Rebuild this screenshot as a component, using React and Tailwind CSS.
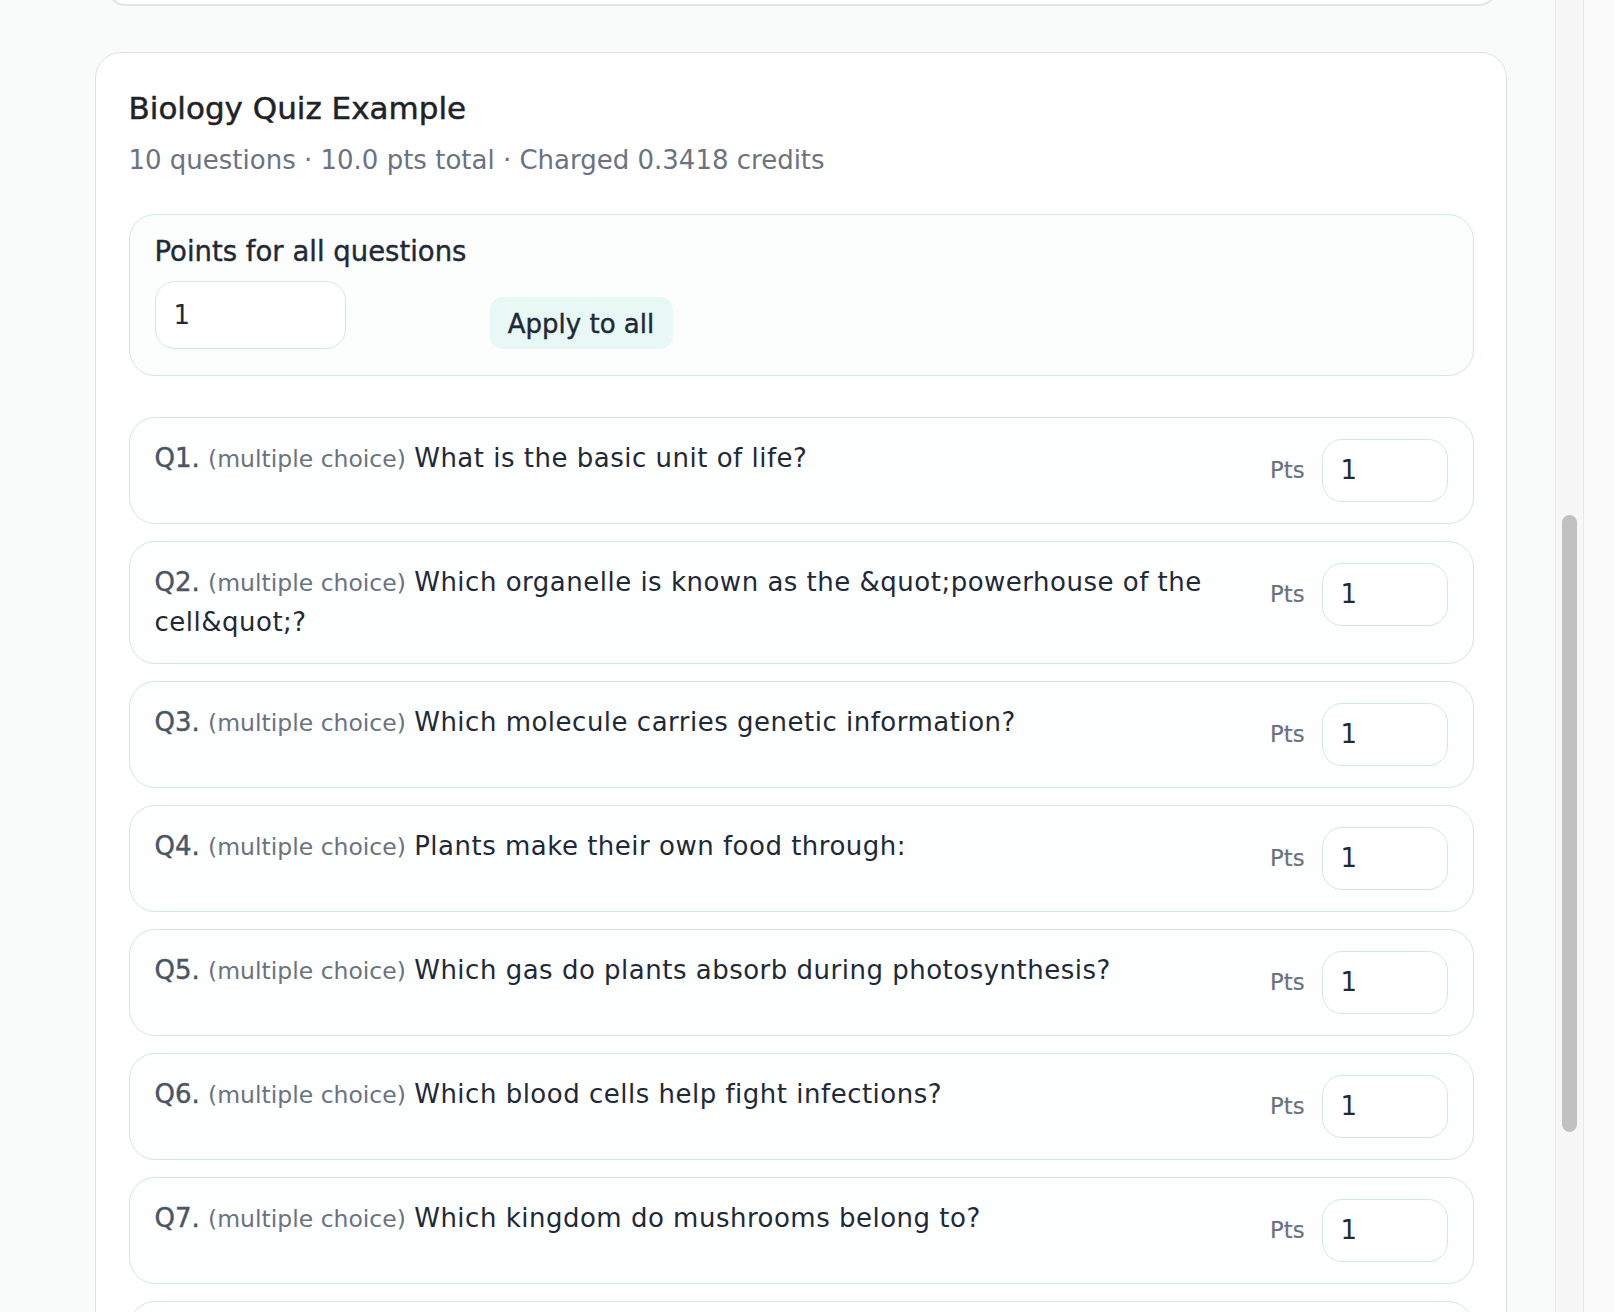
import React from "react";

const questions = [
  { n: 1, text: "What is the basic unit of life?" },
  { n: 2, text: "Which organelle is known as the &quot;powerhouse of the cell&quot;?" },
  { n: 3, text: "Which molecule carries genetic information?" },
  { n: 4, text: "Plants make their own food through:" },
  { n: 5, text: "Which gas do plants absorb during photosynthesis?" },
  { n: 6, text: "Which blood cells help fight infections?" },
  { n: 7, text: "Which kingdom do mushrooms belong to?" },
  { n: 8, text: "What is the main function of red blood cells?" },
];

const QuestionRow = ({ q }) => {
  return (
    <div className="flex items-start gap-[26px] rounded-[26px] border-[1.5px] border-[#cfe9e3] bg-[#fdfefe] px-[25px] py-[21px]">
      <p className="min-w-0 flex-1 text-[26px] leading-[39px] text-[#1f2937]">
        <span className="text-[#4b5563] [-webkit-text-stroke:0.4px]">Q{q.n}.</span>{" "}
        <span className="text-[23.5px] text-[#6b7280]">(multiple choice)</span>{" "}
        <span className="tracking-[0.5px]">{q.text}</span>
      </p>
      <div className="flex shrink-0 items-center gap-[17px]">
        <span className="text-[22.75px] text-[#6b7280] [-webkit-text-stroke:0.2px]">Pts</span>
        <input
          className="h-[63px] w-[126px] rounded-[20px] border-[1.5px] border-[#cfe9e3] bg-white px-[18px] text-[26px] text-[#1f2937] focus:outline-none"
          type="text"
          value="1"
          readOnly
        />
      </div>
    </div>
  );
};

const App = () => {
  return (
    <div className="flex h-[1312px] w-full overflow-hidden bg-[#f9fafa] font-['DejaVu_Sans',sans-serif]">
      <main className="flex min-w-0 flex-1 flex-col">
        {/* bottom of the previous card */}
        <div className="-mt-[34px] ml-[106px] h-[40px] w-[1392px] shrink-0 rounded-[26px] border-2 border-[#e2e5e7] bg-white" />

        <section className="ml-[95px] mt-[46px] w-[1412px] shrink-0 rounded-[26px] border-[1.5px] border-[#dfe2e5] bg-white px-[32.5px] pt-[32.5px]">
          <h2 className="text-[31px] leading-[45px] text-[#1f2328] [-webkit-text-stroke:0.5px]">
            Biology Quiz Example
          </h2>
          <p className="mt-[10px] text-[26px] leading-[39px] text-[#6b7280]">
            10 questions · 10.0 pts total · Charged 0.3418 credits
          </p>

          <div className="mt-[34px] rounded-[26px] border-[1.5px] border-[#cfe9e3] bg-[#fcfefe] px-[25px] pb-[26px] pt-[17px]">
            <label className="block text-[27.5px] leading-[39px] text-[#1f2937] [-webkit-text-stroke:0.4px]">
              Points for all questions
            </label>
            <div className="mt-[10px] flex items-end">
              <input
                className="h-[68px] w-[191px] rounded-[20px] border-[1.5px] border-[#cfe9e3] bg-white px-[18px] text-[26px] text-[#1f2937] focus:outline-none"
                type="text"
                value="1"
                readOnly
              />
              <button
                type="button"
                className="ml-[144px] h-[52px] w-[183px] rounded-[13px] bg-[#e8f8f4] pt-[3px] text-[26px] text-[#1f2937] [-webkit-text-stroke:0.4px]"
              >
                Apply to all
              </button>
            </div>
          </div>

          <div className="mt-[41px] flex flex-col gap-[17px] pb-[40px]">
            {questions.map((q) => (
              <QuestionRow key={q.n} q={q} />
            ))}
          </div>
        </section>
      </main>

      {/* scrollbar */}
      <div className="w-[29px] shrink-0 border-x border-[#e6e8ea] bg-[#f7f7f7] pt-[515px]">
        <div className="ml-[6px] h-[617px] w-[15px] rounded-full bg-[#c1c1c1]" />
      </div>
      <div className="w-[30px] shrink-0 bg-[#fbfbfb]" />
    </div>
  );
};

export default App;
